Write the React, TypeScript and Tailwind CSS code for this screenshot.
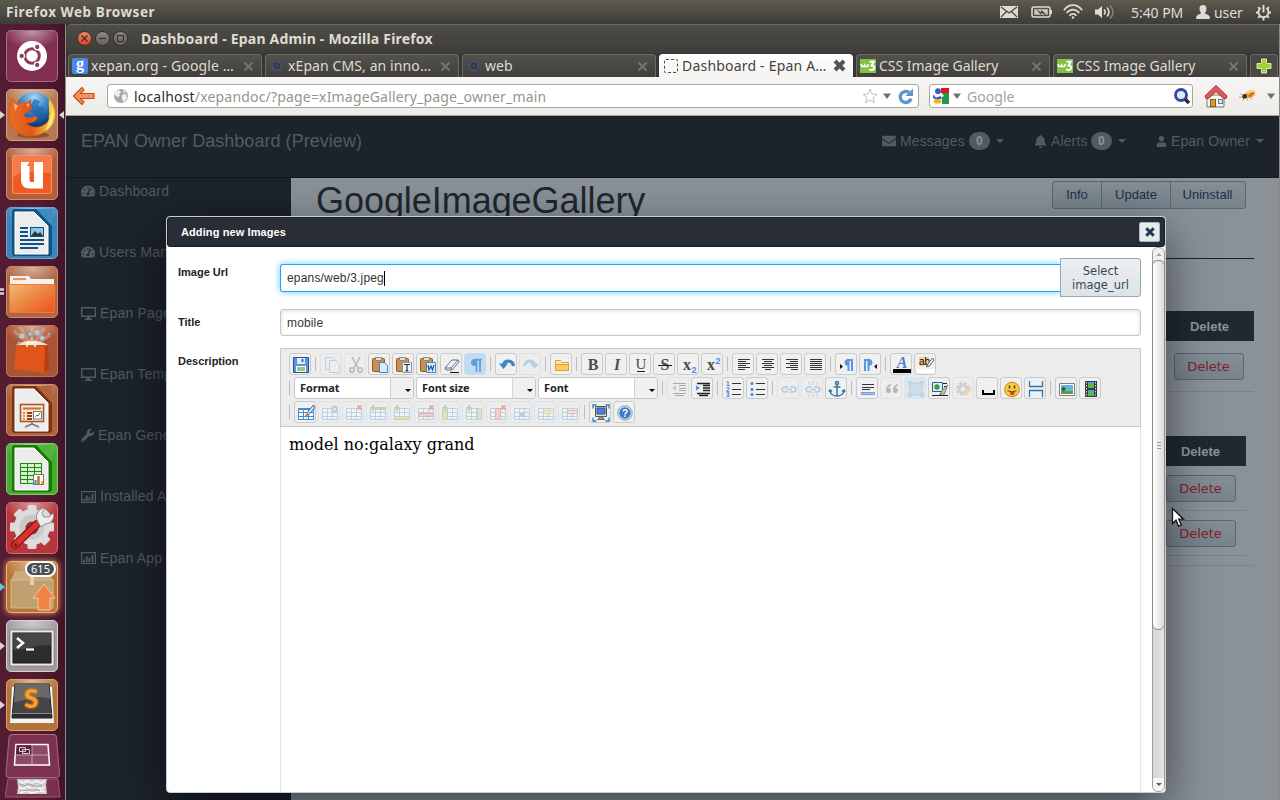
import React from "react";
import type { ReactNode } from "react";
import { FaBell, FaEnvelope, FaTachometerAlt, FaUser, FaWrench } from "react-icons/fa";

const ubuntu = "font-['Noto_Sans',sans-serif]";

/* ---------- top panel ---------- */

function TopBar() {
  return (
    <div className={`flex h-6 shrink-0 items-center justify-between bg-linear-to-b from-[#5d5a4e] to-[#3d3c38] pl-[6px] pr-[8px] text-[#dfdbd2] ${ubuntu}`}>
      <span className="text-[13.5px] font-bold tracking-[0.58px] whitespace-nowrap">Firefox Web Browser</span>
      <div className="flex items-center text-[14px] whitespace-nowrap">
        <svg className="mr-[12px]" width="20" height="14" viewBox="0 0 20 14">
          <rect x="1" y="1" width="18" height="12" fill="#dfdbd2" />
          <path d="M2 2l8 6 8-6M2 12l5.5-5.5M18 12l-5.5-5.5" stroke="#45433d" fill="none" strokeWidth="1.2" />
        </svg>
        <svg className="mr-[10px]" width="22" height="14" viewBox="0 0 22 14">
          <rect x="1" y="2" width="18" height="10" rx="2" fill="none" stroke="#dfdbd2" strokeWidth="1.5" />
          <rect x="3.2" y="4.2" width="13.6" height="5.6" fill="#c9c5bc" />
          <path d="M20 5v4" stroke="#dfdbd2" strokeWidth="2" />
          <path d="M5 4l5 3.500V5l6 5-6-2v2z" fill="#3a3935" />
        </svg>
        <svg className="mr-[12px]" width="20" height="16" viewBox="0 0 20 16" fill="none" stroke="#dfdbd2" strokeWidth="1.7">
          <path d="M.8 6.2C6-.5 14-.5 19.200 6.200M3.700 9C7.500 4.500 12.500 4.500 16.300 9M6.500 11.800c2-2.500 5-2.500 7 0" />
          <circle cx="10" cy="13.500" r="1.200" fill="#dfdbd2" stroke="none" />
        </svg>
        <svg className="mr-[16px]" width="20" height="16" viewBox="0 0 20 16" fill="none" stroke="#dfdbd2" strokeWidth="1.600">
          <path d="M0 5.500h3L7 2v12l-4-3.500H0z" fill="#dfdbd2" stroke="none" />
          <path d="M9 5.500c1.500 1.500 1.500 3.500 0 5M12 3.500c2.500 2.500 2.500 6.500 0 9" />
          <path d="M15 1.500c4 4 4 9 0 13" stroke="#8a877f" />
        </svg>
        <span className="w-[53px] tracking-[-0.05px]">5:40 PM</span>
        <svg className="ml-[12px] mr-[4px]" width="14" height="14" viewBox="0 0 14 14" fill="#dfdbd2">
          <path d="M7 0c2.500 0 3.600 1.500 3.500 3.800C10.400 6 9.500 7.200 9 8c.2 1.200 4.500 1.500 4.800 4v2H.2v-2C.5 9.500 4.800 9.200 5 8 4.500 7.200 3.600 6 3.500 3.800 3.400 1.500 4.500 0 7 0z" />
        </svg>
        <span className="w-[29px] tracking-[-0.1px]">user</span>
        <svg className="ml-[12px]" width="17" height="17" viewBox="0 0 18 18" fill="none" stroke="#dfdbd2">
          <path d="M6 4.300a5.300 5.300 0 1 0 6 0" strokeWidth="2" />
          <path d="M9 1v8" strokeWidth="2" />
          <path d="M9 14.500v3M1 9h3M14 9h3M3.300 14.700l1.800-1.800M14.700 14.700l-1.800-1.800M3.300 3.300l1.800 1.800M14.700 3.300l-1.800 1.800" strokeWidth="2" />
        </svg>
      </div>
    </div>
  );
}

/* ---------- launcher ---------- */

const docSheet = <path d="M11 5h17l14 14v28H9V5z" fill="#ececec" stroke="#fff" strokeWidth="1" />;

function Gear({ cx, cy, r, fill }: { cx: number; cy: number; r: number; fill: string }) {
  return (
    <g>
      {[0, 45, 90, 135].map((a) => (
        <rect key={a} x={cx - 4.500} y={cy - r} width="9" height={2 * r} rx="1.500" fill={fill} transform={`rotate(${a} ${cx} ${cy})`} />
      ))}
      <circle cx={cx} cy={cy} r={r - 4} fill={fill} />
    </g>
  );
}

function Marker({ right, color = "#d8d4d2" }: { right?: boolean; color?: string }) {
  return (
    <svg className={right ? "absolute top-[21px] left-[52px]" : "absolute top-[21px] left-[-7px]"} width="5" height="8" viewBox="0 0 5 8">
      <path d={right ? "M5 0v8L0 4z" : "M0 0v8l5-4z"} fill={color} />
    </svg>
  );
}

function Tile({ className, children, extra }: { className: string; children: ReactNode; extra?: ReactNode }) {
  return (
    <div className={`relative h-[52px] w-[52px] shrink-0 rounded-[5px] border ${className}`}>
      <div className="h-full w-full rounded-[4px] bg-[radial-gradient(ellipse_28px_18px_at_50%_0%,rgba(255,255,255,0.5),rgba(255,255,255,0))]">
        <svg className="relative -top-px -left-px" width="52" height="52" viewBox="0 0 52 52">{children}</svg>
      </div>
      {extra}
    </div>
  );
}

function Launcher() {
  return (
    <div className="flex w-[65px] shrink-0 flex-col gap-[7px] bg-linear-to-r from-[#521c33] via-[#551c33] to-[#431428] pt-[6px] pl-[6px]">
      <Tile className="border-[#a86c84] bg-[#812f50]">
        <circle cx="26" cy="26" r="15" fill="#fff" />
        <circle cx="26" cy="26" r="7.300" fill="none" stroke="#8a3f5c" strokeWidth="3" />
        <g fill="#8a3f5c" stroke="#fff" strokeWidth="1.300">
          <circle cx="15.700" cy="26" r="2.800" />
          <circle cx="31.200" cy="17" r="2.800" />
          <circle cx="31.200" cy="35" r="2.800" />
        </g>
      </Tile>
      <Tile className="border-[#d9a27e] bg-[#b57850]" extra={<><Marker /><Marker right /></>}>
        <defs>
          <radialGradient id="globe" cx="0.500" cy="0.150" r="0.800"><stop offset="0" stopColor="#a9d9f5" /><stop offset="0.450" stopColor="#3a88c8" /><stop offset="1" stopColor="#0b2f6c" /></radialGradient>
          <linearGradient id="fox" x1="0" x2="1"><stop offset="0" stopColor="#ea6f22" /><stop offset="0.550" stopColor="#e0561a" /><stop offset="1" stopColor="#f6c63a" /></linearGradient>
        </defs>
        <ellipse cx="27" cy="46" rx="16" ry="3" fill="#5c3015" opacity="0.500" />
        <circle cx="28" cy="21.500" r="18.500" fill="url(#globe)" />
        <path d="M28 10l6 2-2 5 6 1-1 6 3 3-4 5-7-2-1-6-6-3z" fill="#1c5da3" opacity="0.600" />
        <path d="M43 10c7 8 8 18 3 26-5 8-14 10-20 9 10-2 16-8 17-16 1-6-1-13 0-19z" fill="#f9cf3f" />
        <path d="M6 9l5 6c4-1 7-2 9-1l5-3-1 5 2 4-5 3c-3 1-4 3-2 5 4 2 8-1 12 0 0 5-7 6-11 6 7 7 18 5 24-4 1 5-3 12-9 15-14 6-32-1-32-19 0-7 2-11 3-17z" fill="url(#fox)" stroke="#d9551a" strokeWidth="0.800" />
        <path d="M8 14l4 3-3 5zM20 16l3-2v4z" fill="#fcd9a8" opacity="0.700" />
        <path d="M46 19c3 8 1 18-7 23 3-5 5-12 3-17l1 6q3-5 3-12z" fill="#fbe478" />
      </Tile>
      <Tile className="border-[#d98a66] bg-[#b0603f]">
        <rect x="6.500" y="7.500" width="39" height="38" rx="2" fill="#ef5a25" stroke="#ff9161" />
        <path d="M7 8h38v17C30 25 16 20 7 30z" fill="#ff9a6b" opacity="0.500" />
        <path d="M15 14h8.500l-2 4h2v13.500c0 2 .8 2.500 2.500 2.500h2V14h9v26.500H24c-6 0-9-3-9-9z" fill="#fff" />
        <path d="M23.500 14l-2.500 4h2.500z" fill="#f0703c" />
      </Tile>
      <Tile className="border-[#6ba7cf] bg-[#3f83b8]">
        <rect x="6" y="2" width="40" height="47" rx="3" fill="#0d5389" />
        {docSheet}
        <path d="M30 2h16v17z" fill="#3d8cc4" />
        <path d="M14 21h8M14 25h8M14 29h8M14 33h24M14 37h24M14 41h18" stroke="#0d5389" strokeWidth="2" />
        <rect x="24.500" y="20.500" width="13" height="9" fill="#8dc8ec" stroke="#0d5389" />
        <path d="M25 29l4-5 3 3 2-2 3 4z" fill="#333" />
      </Tile>
      <Tile className="border-[#d08a63] bg-[#ad6843]" extra={<svg className="absolute top-[21px] left-[-7px]" width="6" height="8"><path d="M0 1.500h4M0 5.500h4" stroke="#d8d4d2" strokeWidth="2.500" /></svg>}>
        <defs><linearGradient id="fold" x1="0" y1="0" x2="1" y2="1"><stop offset="0" stopColor="#f3b878" /><stop offset="0.450" stopColor="#eb8a45" /><stop offset="1" stopColor="#f0501e" /></linearGradient></defs>
        <path d="M4 18v-8h19l2 3h23v6H4z" fill="#f4f1ee" />
        <path d="M7 13h13" stroke="#ee9060" strokeWidth="2" />
        <path d="M3 18.500h46l-1 28H4z" fill="url(#fold)" stroke="#e87b3c" />
      </Tile>
      <Tile className="border-[#c8724c] bg-[#a95434]">
        <path d="M26 22L8 6M26 22L14 2M26 22V2M26 22L38 3M26 22L44 10" stroke="#f9c9a4" strokeWidth="3" opacity="0.350" />
        <path d="M10 20q16-9 32 0z" fill="#fff3dc" opacity="0.900" />
        <g fill="#bdc6cd" stroke="#8f9da8" strokeWidth="0.700"><circle cx="16" cy="11" r="3" /><circle cx="24" cy="9" r="2" /><circle cx="31" cy="7.500" r="3" /><circle cx="36" cy="13" r="2.500" /><circle cx="13" cy="18" r="1.300" /><circle cx="26" cy="14" r="1.700" /><circle cx="43" cy="9" r="1" /></g>
        <path d="M10 20l32 1-2 27-32-4z" fill="#e2551a" />
        <path d="M42 21l1 22-5 5 1-27z" fill="#b83e12" />
        <path d="M21 22v-4h8v4" fill="none" stroke="#fff0d8" strokeWidth="1.500" />
      </Tile>
      <Tile className="border-[#d3875c] bg-[#ac6440]">
        <rect x="6" y="2" width="40" height="47" rx="3" fill="#7b3311" />
        {docSheet}
        <path d="M30 2h16v17z" fill="#b3623a" />
        <rect x="14.500" y="20.500" width="23" height="17" fill="#fbe3cf" stroke="#a5531f" strokeWidth="1.500" />
        <path d="M17 24.500h18" stroke="#d07030" strokeWidth="2" />
        <path d="M17 29h2M17 32h2M17 35h2" stroke="#d07030" strokeWidth="1.600" />
        <path d="M21 29h5M21 32h5M21 35h5" stroke="#94400f" strokeWidth="1.800" />
        <rect x="27.500" y="27.500" width="8" height="7.500" fill="#fff" stroke="#777" />
        <path d="M29 33l2-2 1 1 2-3" stroke="#3a9a2c" fill="none" />
        <path d="M26 38v2l-7 3M26 40l7 3" stroke="#777" fill="none" strokeWidth="1.500" />
      </Tile>
      <Tile className="border-[#7ccd69] bg-[#48ab33]">
        <rect x="6" y="2" width="40" height="47" rx="3" fill="#167807" />
        {docSheet}
        <path d="M30 2h16v17z" fill="#4fb33c" />
        <rect x="14" y="20" width="22" height="21" fill="#1c8a0c" />
        {[0, 1, 2, 3, 4].map((r) => [0, 1, 2].map((c) => <rect key={`${r}${c}`} x={15 + c * 7} y={21 + r * 4} width="6" height="3" fill="#d7f0d0" />))}
        <rect x="27.500" y="31.500" width="10" height="10" fill="#fff" stroke="#777" />
        <path d="M29.500 41v-4" stroke="#2c8fd0" strokeWidth="2" /><path d="M32.500 41v-8" stroke="#d8602a" strokeWidth="2.500" /><path d="M36 41v-3" stroke="#e8b020" strokeWidth="2" />
      </Tile>
      <Tile className="border-[#d96a6a] bg-[#b5363d]">
        <Gear cx={26} cy={25} r={22} fill="#dcdcdc" />
        <circle cx="26" cy="25" r="12.500" fill="#c9c9c9" />
        <circle cx="26" cy="26" r="6.500" fill="#9c3038" />
        <path d="M9 43L31 22" stroke="#8d1414" strokeWidth="8" strokeLinecap="round" />
        <path d="M9 43L31 22" stroke="#d8322c" strokeWidth="5.500" strokeLinecap="round" />
        <path d="M31 18c-2-6 2-12 8-12l-3 5 2 4 5 0 4-4c2 6-2 11-8 11l-4 3z" fill="#ececec" stroke="#8c8c8c" />
        <circle cx="9.500" cy="43" r="1.800" fill="#8d1414" />
      </Tile>
      <Tile
        className="border-[#eeb377] bg-[#b9763c] shadow-[0_0_6px_#f5a25a]"
        extra={<><Marker color="#6fc0e8" /><span className={`absolute -top-px left-[18px] flex h-[16px] w-[31px] items-center justify-center rounded-full border-2 border-white bg-[#4b5055] text-[11px] text-white ${ubuntu}`}>615</span></>}
      >
        <path d="M9 10h34l4 9v28H5V19z" fill="#cbab7b" />
        <path d="M5 19h42v28H5z" fill="#c0a071" stroke="#d7b98a" />
        <rect x="24" y="10" width="4" height="14" fill="#e6d0a9" />
        <path d="M38 23l11 14h-5v12H32V37h-5z" fill="#ef8443" stroke="#f7c6a0" />
      </Tile>
      <Tile className="border-[#d6d1d3] bg-[#a29a9d]" extra={<Marker />}>
        <rect x="4" y="10" width="44" height="36" fill="#e9e9e9" stroke="#666" strokeWidth="0.600" />
        <rect x="7" y="13" width="38" height="30" fill="#2d2d2d" stroke="#111" />
        <path d="M7 13h38v12C32 24 20 30 7 30z" fill="#555" opacity="0.600" />
        <path d="M11 18l6 5-6 5" stroke="#fff" strokeWidth="2.500" fill="none" /><path d="M20 29.500h8" stroke="#fff" strokeWidth="2.200" />
      </Tile>
      <Tile className="border-[#e0a268] bg-[#b07339]" extra={<><Marker /><span className="absolute top-[5px] left-[17px] font-['Lato',sans-serif] text-[26px] leading-[26px] font-black text-[#ff9d2b] [text-shadow:0_0_3px_#ff8800]">S</span></>}>
        <path d="M6 8h40l2 36H4z" fill="#f2f2f2" />
        <path d="M9 5h34l3 34H6z" fill="#454545" stroke="#222" />
        <path d="M9 5h34l1 15C30 14 18 23 8 23z" fill="#777" opacity="0.700" />
        <path d="M6 35h40v4H6z" fill="#2b2b2b" /><path d="M6 34.500h40" stroke="#888" />
      </Tile>
      <svg className="-mt-[4px] -ml-px shrink-0" width="56" height="66" viewBox="0 0 56 66">
        <path d="M3 45h50l2 18H0z" fill="#7a2f4b" stroke="#9b5a74" />
        <path d="M12 45h30l-1 6 1 9H12l1-7z" fill="#cfcccc" />
        <path d="M14 47l4 2 4-2 5 2 5-2 4 2 4-2M14 53l4 2 4-3 5 3 5-2 4 2 4-2M15 59l6-2 6 2 8-2 5 1" stroke="#f7f7f7" strokeWidth="1.600" fill="none" />
        <path d="M15 50l5 2 5-2 6 3 6-2M17 56l5 1 5-2 8 2" stroke="#9a9595" strokeWidth="0.800" fill="none" />
        <path d="M7 .500h42q2.500 0 2.500 3l3 37q0 3-3 3H4q-3 0-3-3L4 3.500q0-3 3-3z" fill="#7d3150" stroke="#aa6a84" />
        <path d="M11 10.500h32l1.500 20.500H9.500z" fill="#8e4a64" stroke="#fff" strokeWidth="1.500" />
        <path d="M11.700 11.300H27V20.500H11z" fill="#5a1f36" /><path d="M27 11v20M10 21h34" stroke="#b9a6ad" />
        <path d="M14.500 13.500h6v4h-6zM17.500 15.500h7v4h-7z" fill="#5a1f36" stroke="#d8c8cf" />
      </svg>
    </div>
  );
}

/* ---------- browser chrome ---------- */

function CloseX({ active }: { active?: boolean }) {
  return (
    <svg width="13" height="13" viewBox="0 0 13 13">
      <path d={active ? "M2 2l9 9M11 2l-9 9" : "M2.500 2.500l8 8M10.500 2.500l-8 8"} stroke={active ? "#55534f" : "#77756f"} strokeWidth={active ? 4 : 2} />
    </svg>
  );
}

function CogFav() {
  return (
    <svg width="14" height="14" viewBox="0 0 14 14" fill="none">
      <circle cx="7" cy="7" r="5" stroke="#3f5170" strokeWidth="2" strokeDasharray="2 1.930" />
      <circle cx="7" cy="7" r="3.600" stroke="#3f5170" strokeWidth="1.400" />
      <circle cx="7" cy="7" r="2.500" stroke="#222a38" strokeWidth="0.900" />
    </svg>
  );
}

const googleFav = (
  <span className="flex h-4 w-4 shrink-0 items-center justify-center rounded-[2px] bg-[#4a86f0] font-['Liberation_Serif',serif] text-[16px] leading-none font-bold text-white">
    <span className="-mt-1">g</span>
  </span>
);
const w3Fav = (
  <svg width="16" height="14" viewBox="0 0 16 14" fill="none" stroke="#fff">
    <rect width="16" height="14" fill="#84c241" stroke="none" />
    <path d="M1 5l.800 2.500h2L4.500 6l.800 1.500h2L8.500 5" strokeWidth="1.600" />
    <path d="M9.500 2.800h4.300L11.500 6.500c4 0 3.500 4.500 0 4.500q-1.800 0-2-1.200" strokeWidth="1.900" />
  </svg>
);
const dashedFav = <span className="h-[14px] w-[14px] shrink-0 rounded-[2px] border border-dashed border-[#4a4a4a]" />;

function Tab({ icon, label, tracking, active }: { icon: ReactNode; label: string; tracking: string; active?: boolean }) {
  return (
    <div className={`flex h-[23px] w-[194px] shrink-0 items-center rounded-t-[4px] ${active ? "bg-linear-to-b from-white to-[#f5f3f1] pl-[4px] text-[#45423c]" : "border border-b-0 border-[#6b6962] bg-linear-to-b from-[#52514c] to-[#413f3b] pl-[3px] text-[#dfdbd2]"}`}>
      <span className="flex w-4 shrink-0 justify-center">{icon}</span>
      <span className={`ml-[3px] flex-1 text-[14px] leading-5 whitespace-nowrap ${tracking}`}>{label}</span>
      <span className={active ? "mr-[7px]" : "mr-[6px]"}><CloseX active={active} /></span>
    </div>
  );
}

function WinButton({ red, children }: { red?: boolean; children: ReactNode }) {
  return (
    <span className={`flex h-[15px] w-[15px] items-center justify-center rounded-full border border-[#31302c] ${red ? "bg-linear-to-b from-[#f58563] to-[#de4417]" : "bg-linear-to-b from-[#8b8981] to-[#65635b]"}`}>
      <svg width="9" height="9" viewBox="0 0 9 9" fill="none" stroke="#33322e" strokeWidth="1.200">{children}</svg>
    </span>
  );
}

function Caret({ className }: { className?: string }) {
  return <svg className={className} width="8" height="6" viewBox="0 0 8 6"><path d="M0 .5h8L4 6z" fill="#72706b" /></svg>;
}

function BrowserChrome() {
  return (
    <div className={`shrink-0 ${ubuntu}`}>
      <div className="flex h-[29px] items-center gap-[3px] rounded-tl-[5px] border-t border-[#6c6a62] bg-linear-to-b from-[#4e4c46] to-[#3e3d39] pb-px pl-[11px]">
        <WinButton red><path d="M1.500 1.500l6 6M7.500 1.500l-6 6" /></WinButton>
        <WinButton><path d="M1 4.500h7" /></WinButton>
        <WinButton><rect x="1.500" y="1.500" width="6" height="6" /></WinButton>
        <span className="ml-[10px] text-[14px] leading-[18px] font-bold tracking-[0.2px] whitespace-nowrap text-[#dfdbd2]">Dashboard - Epan Admin - Mozilla Firefox</span>
      </div>
      <div className="flex h-[24px] items-end gap-[3px] bg-[#373632] pl-[2px]">
        <Tab icon={googleFav} label="xepan.org - Google …" tracking="tracking-[0.13px]" />
        <Tab icon={<CogFav />} label="xEpan CMS, an inno…" tracking="tracking-[0.1px]" />
        <Tab icon={<CogFav />} label="web" tracking="tracking-[0.1px]" />
        <Tab icon={dashedFav} label="Dashboard - Epan A…" tracking="tracking-[0.2px]" active />
        <Tab icon={w3Fav} label="CSS Image Gallery" tracking="tracking-[-0.02px]" />
        <Tab icon={w3Fav} label="CSS Image Gallery" tracking="tracking-[-0.02px]" />
        <div className="flex h-[23px] w-[28px] items-center justify-center rounded-t-[4px] border border-b-0 border-[#6b6962] bg-[#4a4944]">
          <svg width="16" height="16" viewBox="0 0 16 16"><path d="M5.500 1h5v4.500H15v5h-4.500V15h-5v-4.500H1v-5h4.500z" fill="#a4cf45" stroke="#d9efb0" /></svg>
        </div>
      </div>
      <div className="flex h-[39px] items-center border-b border-[#a5a29d] bg-linear-to-b from-[#f7f6f4] to-[#edebe8] text-[14px]">
        <svg className="ml-[6px]" width="24" height="20" viewBox="0 0 24 20"><path d="M10 1.500L1.500 10l8.500 8.500 2-2.500-3.500-3.500H22v-5H8.500L12 4z" fill="#f2955b" stroke="#cd4a17" strokeWidth="1.200" strokeLinejoin="round" /></svg>
        <div className="ml-[11px] flex h-[24px] w-[812px] items-center rounded-[3px] border border-[#a9a5a0] bg-white">
          <svg className="ml-[5px]" width="16" height="16" viewBox="0 0 16 16"><circle cx="8" cy="8" r="7" fill="#a9a9a9" /><path d="M2 4l4-2 2 2-2 2 1 2-3 1-2-2zM9 7l4-1 1 4-3 4-2-3zM10 2l3 2-2 1z" fill="#f2f2f2" /></svg>
          <span className="ml-[5px] flex-1 whitespace-nowrap tracking-[0.18px] text-[#979490]"><span className="text-[#2f2d2a]">localhost</span>/xepandoc/?page=xImageGallery_page_owner_main</span>
          <svg width="16" height="16" viewBox="0 0 16 16"><path d="M8 1l2 5 5 .300-4 3.400 1.300 5L8 12l-4.300 2.700L5 9.700 1 6.300 6 6z" fill="#fff" stroke="#c2bfbb" /></svg>
          <Caret className="ml-[5px]" />
          <svg className="ml-[6px] mr-[4px]" width="17" height="17" viewBox="0 0 17 17"><path d="M14 10.500A5.500 5.500 0 1 1 12 4.500" fill="none" stroke="#5b94cf" strokeWidth="3.400" /><path d="M16 .500v7.500H8.500z" fill="#5b94cf" /></svg>
        </div>
        <div className="ml-[10px] flex h-[24px] w-[264px] items-center rounded-[3px] border border-[#a9a5a0] bg-white">
          <svg className="ml-[3px]" width="16" height="16" viewBox="0 0 16 16"><path d="M8 0h8v5H8z" fill="#e8140f" /><path d="M9 5h7v11H9z" fill="#1b9a4e" /><circle cx="5" cy="3.200" r="2.900" fill="#2a62c9" /><path d="M0 6.500l3 3 5-1.500 1 2.500-5 1.500-4-2z" fill="#2a62c9" /><ellipse cx="4.500" cy="13.300" rx="3.800" ry="2.300" fill="#f2b314" /><circle cx="9" cy="7.500" r="1.500" fill="#fff" /></svg>
          <Caret className="ml-[4px]" />
          <span className="ml-[6px] flex-1 tracking-[0.05px] text-[#a5a29e]">Google</span>
          <svg className="mr-[1px]" width="18" height="18" viewBox="0 0 18 18"><circle cx="8" cy="8" r="5.500" fill="#dfe9f5" stroke="#33479c" strokeWidth="2.800" /><path d="M12 12l4 4" stroke="#2b2d3d" strokeWidth="3.500" /></svg>
        </div>
        <svg className="ml-[11px]" width="24" height="24" viewBox="0 0 24 24"><path d="M3 11h17v12H3z" fill="#f4f4f2" stroke="#777" /><path d="M12 1.500L1 12l1 2.500h2.500l7.500-7 7.500 7H22l1-2.500z" fill="#e05a58" stroke="#a92b2b" /><rect x="6.500" y="15.500" width="5" height="7" fill="#d49b35" stroke="#8a5c16" /><rect x="14.500" y="15.500" width="4" height="4" fill="#cfe4f5" stroke="#6d7f92" /></svg>
        <svg className="ml-[11px]" width="18" height="16" viewBox="0 0 18 16"><ellipse cx="11" cy="6" rx="5.500" ry="3.600" fill="#ef9a2e" transform="rotate(-25 11 6)" /><path d="M8 5l5-2.500 3 1" stroke="#f9d98a" strokeWidth="2" fill="none" /><circle cx="5.500" cy="8.500" r="2.400" fill="#3c2d1f" /><path d="M1 5l3 3M0 9l4 0M3 13l3-3M9 13l-1-3M13 12l-2-3" stroke="#a89a8c" strokeWidth="0.800" /><path d="M11 7v1.500M13 5v1.500" stroke="#a83a10" strokeWidth="1.500" /></svg>
        <Caret className="ml-[10px]" />
      </div>
    </div>
  );
}

/* ---------- dashboard page ---------- */

const desktopIcon = <svg width="15" height="13" viewBox="0 0 15 13"><path d="M.7.700h13.600v8.600H.7z" fill="none" stroke="#525b62" strokeWidth="1.400" /><path d="M6 10h3v1.500h2V13H4v-1.500h2z" fill="#525b62" /></svg>;
const chartIcon = <svg width="15" height="12" viewBox="0 0 15 12"><path d="M.6.600h13.800v10.800H.6z" fill="none" stroke="#525b62" strokeWidth="1.200" /><path d="M3 10V7.500M5.700 10V4.500M8.400 10V6M11.500 10V3" stroke="#525b62" strokeWidth="1.900" /></svg>;

const sideItems: { icon: ReactNode; label: string }[] = [
  { icon: <FaTachometerAlt size={14} />, label: "Dashboard" },
  { icon: <FaTachometerAlt size={14} />, label: "Users Management" },
  { icon: desktopIcon, label: "Epan Pages" },
  { icon: desktopIcon, label: "Epan Templates" },
  { icon: <FaWrench size={13} />, label: "Epan General Settings" },
  { icon: chartIcon, label: "Installed Applications" },
  { icon: chartIcon, label: "Epan App" },
];

function Count() {
  return <span className="ml-[4px] flex h-[18px] w-[21px] items-center justify-center rounded-full bg-[#525b62] text-[12px] font-bold text-[#8a9298]">0</span>;
}

function NavCaret({ className }: { className: string }) {
  return <svg className={className} width="8" height="4" viewBox="0 0 8 4"><path d="M0 0h8L4 4z" fill="#525b62" /></svg>;
}

function DeleteButton() {
  return <span className="flex h-[27px] w-[70px] items-center justify-center rounded-[3px] border border-[#55677a] bg-linear-to-b from-[#838e96] to-[#78838b] pr-px font-['DejaVu_Sans',sans-serif] text-[13px] text-[#85222a]">Delete</span>;
}

function Dashboard() {
  return (
    <div className="flex min-h-0 flex-1 flex-col bg-[#1c232a] font-['Liberation_Sans',sans-serif] text-[#525b62]">
      <div className="flex h-[62px] shrink-0 items-start justify-between border-b border-[#12181d] pt-[14px] pr-[15px] pl-[15px]">
        <span className="text-[18px] leading-[22px] tracking-[0.04px]">EPAN Owner Dashboard (Preview)</span>
        <div className="flex items-center pt-[2px] text-[14px] leading-[18px] tracking-[0.12px] whitespace-nowrap">
          <FaEnvelope size={14} /><span className="ml-[4px] w-[65px]">Messages</span><Count /><NavCaret className="ml-[6px]" />
          <FaBell className="ml-[30px]" size={13} /><span className="ml-[4px] w-[36px]">Alerts</span><Count /><NavCaret className="ml-[6px]" />
          <FaUser className="ml-[30px]" size={11} /><span className="ml-[4px] w-[79px]">Epan Owner</span><NavCaret className="ml-[6px]" />
        </div>
      </div>
      <div className="flex min-h-0 flex-1">
        <nav className="flex w-[225px] shrink-0 flex-col pl-[15px] text-[14px] tracking-[0.18px]">
          {sideItems.map((s, i) => (
            <div key={i} className="mb-[35.200px] flex h-[26px] shrink-0 items-center gap-[4px] whitespace-nowrap">{s.icon}<span>{s.label}</span></div>
          ))}
        </nav>
        <div className="flex-1 bg-[#8a9298] pr-[25px] pl-[25px]">
          <div className="flex h-[81px] items-start justify-between border-b border-[#16232e]">
            <h1 className="mt-[3px] text-[36px] leading-[40px] tracking-[-0.05px] text-[#1d2731]">GoogleImageGallery</h1>
            <div className="mt-[3px] mr-[8px] flex h-[28px] rounded-[3px] border border-[#55677a] bg-linear-to-b from-[#838e96] to-[#78838b] text-[13px] text-[#1c3046]">
              <span className="flex w-[49px] items-center justify-center border-r border-[#55677a]">Info</span>
              <span className="flex w-[69px] items-center justify-center border-r border-[#55677a]">Update</span>
              <span className="flex w-[74px] items-center justify-center pr-px">Uninstall</span>
            </div>
          </div>
          <div className="mt-[52px] flex h-[30px] items-center justify-end bg-[#1f2932] pt-px pr-[25px] text-[13px] font-bold text-[#8d959b]">Delete</div>
          <div className="flex h-[51px] items-start justify-end border-b border-[#788289] pt-[12px] pr-[10px]"><DeleteButton /></div>
          <div className="mt-[44px] h-[130px] rounded-b-[3px] border-b border-[#788289] pr-[8px]">
            <div className="flex h-[30px] items-center justify-end bg-[#1f2932] pt-px pr-[26px] text-[13px] font-bold text-[#8d959b]">Delete</div>
            <div className="flex h-[45px] items-start justify-end border-b border-[#788289] pt-[9px] pr-[10px]"><DeleteButton /></div>
            <div className="flex h-[45px] items-start justify-end border-b border-[#788289] pt-[9px] pr-[10px]"><DeleteButton /></div>
          </div>
        </div>
      </div>
    </div>
  );
}

/* ---------- editor toolbar ---------- */

const clip = <g><rect x="0.500" y="1.500" width="12" height="13" rx="1" fill="#c9924e" stroke="#8a5a1e" /><path d="M3.500.500h6v3h-6z" fill="#e8e0cc" stroke="#777" strokeWidth="0.800" /></g>;
const grid = <g><path d="M.5 3.500h15v11H.5z" fill="#fff" /><path d="M.5 3.500h15v11H.5zM.5 7.500h15M.5 11.500h15M5.500 3.500v11M10.500 3.500v11" stroke="#5aa2dc" fill="none" /></g>;
const cross = <path d="M11.500.500l4 4M15.500.500l-4 4" stroke="#d8262c" strokeWidth="2" />;
const plus = <path d="M3 0v6M0 3h6" stroke="#6cae3a" strokeWidth="2" />;
const lines = (rows: [number, number][]) => <path d={rows.map(([a, b], i) => `M${a} ${2.5 + i * 2}H${b}`).join("")} stroke="#333" />;
const chain = <path d="M7 6H4q-3 0-3 2.500T4 11h3M9 6h3q3 0 3 2.500T12 11H9M5 8.500h6" stroke="#4b93c8" strokeWidth="1.600" fill="none" />;
const glyph = (t: string, cls: string, x = 8) => <text x={x} y="13" textAnchor="middle" className={cls}>{t}</text>;
const serif = "fill-[#4d4d4d] font-['Liberation_Serif',serif] text-[16px] font-bold";

const icons: Record<string, ReactNode> = {
  save: <g><path d="M.5.500h15v15H.5z" fill="#5a93e0" stroke="#27539b" /><path d="M4 1h8v6H4z" fill="#dfeafa" /><path d="M9.500 2v3" stroke="#3a6fc0" strokeWidth="2" /><path d="M3 9h10v6H3z" fill="#fff" /><path d="M4 11h8M4 13h8" stroke="#79b453" strokeWidth="1.300" /></g>,
  copy: <g fill="#eaf3fb" stroke="#6b9dc4"><path d="M1.500.500h7l3 3v9h-10z" /><path d="M5.500 3.500h6l4 4v8h-10z" /></g>,
  cut: <g fill="none" stroke="#555" strokeWidth="1.500"><path d="M4 0l6 11M12 0L6 11" /><circle cx="4" cy="13" r="2.200" /><circle cx="12" cy="13" r="2.200" /></g>,
  paste: <g>{clip}<path d="M7.500 5.500h5l3 3v7h-8z" fill="#d7e9fa" stroke="#4b7fc0" /></g>,
  pasteText: <g>{clip}<path d="M6.500 5.500h9v10h-9z" fill="#f4f4f4" stroke="#7a9ac4" /><path d="M8 7.500h6M11 8v6M9.500 13.800h3" stroke="#333" strokeWidth="1.200" /></g>,
  pasteWord: <g>{clip}<path d="M6.500 5.500h9v10h-9z" fill="#e7f1fb" stroke="#4b7fc0" /><path d="M8 8l1 5 2-4 1.500 4 1.500-5" stroke="#1f5e96" strokeWidth="1.300" fill="none" /></g>,
  eraser: <g><path d="M1 11l7-8h6l1 2-7 8H2z" fill="#f7f8fb" stroke="#5a6b94" /><path d="M1 11h6l7-8M7 11l1 2" stroke="#5a6b94" fill="none" /><path d="M6 15.500h9" stroke="#111" /></g>,
  pilcrow: <g><path d="M8.500 2h-2a3.500 3.500 0 0 0 0 7h2z" fill="#5fa0d8" /><path d="M6 2.700h8M8.500 2v13M12 2v13" fill="none" stroke="#5fa0d8" strokeWidth="1.800" /></g>,
  undo: <g><path d="M4.500 8c1-5 9-5.500 10 1" fill="none" stroke="#3a87c4" strokeWidth="3.300" /><path d="M0 6.500h9L4.500 12z" fill="#3a87c4" /></g>,
  redo: <g><path d="M11.500 8c-1-5-9-5.500-10 1" fill="none" stroke="#5a9fd4" strokeWidth="3.300" /><path d="M16 6.500H7l4.500 5.500z" fill="#5a9fd4" /></g>,
  folder: <g><path d="M1.500 13.500v-10h5l1.500 2h6.500v8z" fill="#fbe9b0" stroke="#d7a43a" /><path d="M1.500 7.500h13v6h-13z" fill="#f9cf57" stroke="#d7a43a" /></g>,
  bold: glyph("B", serif),
  italic: glyph("I", `${serif} italic`),
  underline: <g><text x="8" y="12" textAnchor="middle" className="fill-[#4d4d4d] font-['Liberation_Serif',serif] text-[15px]">U</text><path d="M4 14.500h8" stroke="#222" /></g>,
  strike: <g>{glyph("S", serif)}<path d="M1 8.500h14" stroke="#222" /></g>,
  sub: <g>{glyph("x", serif, 6)}<text x="10.500" y="16" className="fill-[#4a8de0] font-['Liberation_Sans',sans-serif] text-[9px] font-bold">2</text></g>,
  sup: <g>{glyph("x", serif, 6)}<text x="10.500" y="7" className="fill-[#4a8de0] font-['Liberation_Sans',sans-serif] text-[9px] font-bold">2</text></g>,
  left: lines([[2, 14], [2, 10], [2, 14], [2, 10], [2, 14], [2, 9]]),
  center: lines([[2, 14], [4, 12], [2, 14], [4, 12], [2, 14], [5, 11]]),
  right: lines([[2, 14], [6, 14], [2, 14], [6, 14], [2, 14], [7, 14]]),
  justify: lines([[2, 14], [2, 14], [2, 14], [2, 14], [2, 14], [2, 14]]),
  ltr: <g><path d="M9 2.500a3 3 0 0 0 0 6z" fill="#5b96e0" stroke="#5b96e0" /><path d="M8 3h6M9.500 3v11M13 3v11" fill="none" stroke="#5b96e0" strokeWidth="2" /><path d="M1 7l3 2.500L1 12z" fill="#111" /></g>,
  rtl: <g><path d="M6 2.500a3 3 0 0 1 0 6z" fill="#5b96e0" stroke="#5b96e0" /><path d="M1 3h6M2 3v11M5.500 3v11" fill="none" stroke="#5b96e0" strokeWidth="2" /><path d="M14 7l-3 2.500 3 2.500z" fill="#111" /></g>,
  color: <g><text x="8" y="11" textAnchor="middle" className="fill-[#4a80d4] font-['Liberation_Serif',serif] text-[16px] font-bold italic">A</text><path d="M-1 14h18" stroke="#000" strokeWidth="4" /></g>,
  bgcolor: <g><path d="M1 0h10v9H1z" fill="#fccf9b" /><text x="1" y="8" className="fill-black font-['Liberation_Sans',sans-serif] text-[10px]">ab</text><path d="M14.500 1l-4 5-2 4 3-1 4.500-6z" fill="#e8edf5" stroke="#666" /><path d="M-1 14h18" stroke="#fff" strokeWidth="4" /></g>,
  outdent: <g><path d="M2 2.500h13M8 4.500h7M8 7.500h7M8 9.500h7M2 12.500h13M4 14.500h9" stroke="#333" /><path d="M5 4.500v5L1 7z" fill="#4a8de0" /></g>,
  indent: <g><path d="M2 2.500h13M8 4.500h7M8 7h7M8 9.500h7M2 12.500h13M4 14.500h9" stroke="#222" strokeWidth="1.300" /><path d="M1 4.500v5L5 7z" fill="#4a8de0" /></g>,
  ol: <g><path d="M6 2.500h9M6 8.500h9M6 13.500h9" stroke="#333" /><g className="fill-[#3f84dd] font-['Liberation_Sans',sans-serif] text-[6.500px] font-bold"><text x="0" y="5">1</text><text x="0" y="10.500">2</text><text x="0" y="16">3</text></g></g>,
  ul: <g><path d="M6 2.500h9M6 8.500h9M6 13.500h9" stroke="#333" /><g fill="#3f84dd"><circle cx="2" cy="2.500" r="1.500" /><circle cx="2" cy="8.500" r="1.500" /><circle cx="2" cy="13.500" r="1.500" /></g></g>,
  link: chain,
  unlink: <g>{chain}<path d="M8 0v4M3 1l2 3M13 1l-2 3M8 13v3M3 16l2-3M13 16l-2-3" stroke="#e05a4a" /></g>,
  anchor: <g fill="none" stroke="#35759f" strokeWidth="1.500"><circle cx="8" cy="2" r="1.500" /><path d="M8 4v11M4.500 6h7M1 9c0 8 14 8 14 0M0 11l1-2 2 1.500M16 11l-1-2-2 1.500" /></g>,
  hr: <g><path d="M2 3.500h12M2 6.500h12M2 8.500h8" stroke="#333" /><path d="M1.500 11.500h13v2h-13z" fill="#a9c7f3" stroke="#6f9be0" /></g>,
  quote: <path d="M7 3Q2 4 2 9a2.500 2.500 0 1 0 2.500-2Q4.500 5 7 4.500zM14 3Q9 4 9 9a2.500 2.500 0 1 0 2.500-2Q11.500 5 14 4.500z" fill="#555" />,
  div: <g><path d="M2 2h12v12H2z" fill="#9cc7e8" stroke="#5a9fd4" /><path d="M0 0h4v4H0zM12 0h4v4h-4zM0 12h4v4H0zM12 12h4v4h-4z" fill="#6fa8d6" /></g>,
  template: <g><path d="M.5 1.500h10v9H.5z" fill="#dff0fa" stroke="#2a5c96" /><circle cx="5" cy="6" r="2.700" fill="#3f9a34" /><path d="M11 2.500h4M12 5.500h3M0 14.500h16" stroke="#222" /><path d="M15.500 4l-5 5-3 5 3-1.500 1.500 1L14 9z" fill="#f1c24a" stroke="#4b7fc0" /></g>,
  gear: <g><circle cx="7" cy="8" r="5.500" fill="none" stroke="#999" strokeWidth="3" strokeDasharray="3 1.300" /><circle cx="7" cy="8" r="3.500" fill="none" stroke="#999" strokeWidth="2" /><path d="M15 6l-7 8" stroke="#f0a94a" strokeWidth="3.500" /></g>,
  nbsp: <path d="M3 9v4h11V9" fill="none" stroke="#000" strokeWidth="2" />,
  smiley: <g><circle cx="8" cy="8.500" r="7.300" fill="#f9cd42" stroke="#b98522" /><path d="M5.500 4.500v3M10.500 4.500v3" stroke="#5d3a0c" strokeWidth="1.500" /><path d="M3.500 9.500q4.500 3 9 0" stroke="#5d3a0c" fill="none" /><path d="M6 11h4.500v2q-2 2.500-4.500 0z" fill="#d9452c" /></g>,
  pagebreak: <g fill="#e4f3fc" stroke="#35759f" strokeWidth="1.300"><path d="M1.500 0v5.500h13V0M1.500 16V9.500h13V16" /></g>,
  image: <g><path d="M.5 2.500h15v12H.5z" fill="#fff" stroke="#7d7d7d" /><path d="M2 4h12v9H2z" fill="#62b3ea" /><path d="M2 10h12v3H2z" fill="#5c9b3e" /><circle cx="4.500" cy="8" r="2" fill="#2c5e22" /></g>,
  video: <g><path d="M2 0h12v16H2z" fill="#3a3a3a" /><path d="M5 1h6v6H5zM5 9h6v6H5z" fill="#4aa4e0" /><path d="M5 4l3-2 3 3v2H5zM5 12l3-2 3 3v2H5z" fill="#5cb83a" /><path d="M3.500 1v15M12.500 1v15" stroke="#ddd" strokeDasharray="1.500 1.500" /></g>,
  table: <g>{grid}<path d="M.5 3.500h15v11H.5zM.5 4.500h15M.5 7.500h15M.5 11.500h15M5.500 3.500v11M10.500 3.500v11" stroke="#3d8ed4" fill="none" /><path d="M15.500 0l-5 6-3 5 4-2 5-6z" fill="#d9ecfa" stroke="#2f6298" /><path d="M6.500 11.500l2-3.500 2 2z" fill="#e49a2c" /></g>,
  tProps: <g>{grid}<circle cx="12.500" cy="4" r="2.500" fill="#ddd" stroke="#888" strokeWidth="2" /></g>,
  tDel: <g>{grid}{cross}</g>,
  rowBefore: <g>{grid}<path d="M6 2h10v3H6z" fill="#6cae3a" />{plus}</g>,
  rowAfter: <g>{grid}<path d="M.5 11.500h15v3H.5z" fill="#b5da93" stroke="#6cae3a" />{plus}</g>,
  rowDel: <g>{grid}<path d="M.5 8.500h15v3H.5z" fill="#f09a92" stroke="#d8554a" />{cross}</g>,
  colBefore: <g>{grid}<path d="M.5 5.500h5v9h-5z" fill="#b5da93" stroke="#6cae3a" />{plus}</g>,
  colAfter: <g>{grid}<path d="M11.500 3.500h4v11h-4z" fill="#b5da93" stroke="#6cae3a" />{plus}</g>,
  colDel: <g>{grid}<path d="M5.500 3.500h5v11h-5z" fill="#f09a92" stroke="#d8554a" />{cross}</g>,
  cell: <g>{grid}<path d="M6 8h4.500v3H6z" fill="#7497b8" /></g>,
  merge: <g>{grid}<path d="M5.500 5.500h10v3h-10z" fill="#ffe48a" stroke="#dfae2c" /></g>,
  split: <g>{grid}<path d="M5.500 5.500h10v3h-10z" fill="#ffd9d6" stroke="#d8554a" /></g>,
  maximize: <g><path d="M2.500 1.500h11v10h-11z" fill="#d8d8d4" stroke="#555" /><path d="M4 3h8v6H4z" fill="#4b81cf" stroke="#2d57a0" /><path d="M6 12h4v2H6zM4 14.500h8" stroke="#666" fill="#bbb" /><path d="M0 3.500V0h3.500M12.500 0H16v3.500M0 12.500V16h3.500M12.500 16H16v-3.500" stroke="#2f7fc0" fill="none" strokeWidth="1.300" /></g>,
  help: <g><circle cx="8" cy="8" r="7.300" fill="#cfe0f2" stroke="#6a96c8" strokeWidth="0.800" /><circle cx="8" cy="8" r="5.700" fill="#3d7ac2" /><text x="8" y="11.500" textAnchor="middle" className="fill-white font-['Liberation_Sans',sans-serif] text-[10px] font-bold">?</text></g>,
};

function Btn({ name, off, on }: { name: string; off?: boolean; on?: boolean }) {
  return (
    <span className={`mr-[2px] flex h-[22px] w-[22px] shrink-0 items-center justify-center rounded-[3px] border pt-[2px] pl-[2px] ${on ? "border-[#c3dcef] bg-[#c1dcf1]" : "border-[#cbcbcb] bg-[#f0f0f0]"} ${off ? "opacity-35" : ""}`}>
      <svg width="16" height="16" viewBox="0 0 16 16" className="shrink-0 overflow-visible">{icons[name]}</svg>
    </span>
  );
}

const Sep = () => <span className="mr-[4px] ml-[2px] h-[14px] w-px shrink-0 bg-[#bdbdbd]" />;
const LeadSep = () => <span className="mr-[4px] h-[14px] w-px shrink-0 bg-[#bdbdbd]" />;

function Combo({ label }: { label: string }) {
  return (
    <span className="mr-[2px] flex h-[22px] w-[120px] shrink-0 overflow-hidden rounded-[3px] border border-[#c8c8c8] bg-white font-['Open_Sans',sans-serif] text-[11px] font-bold text-[#222]">
      <span className="flex flex-1 items-center pl-[5px] tracking-[-0.1px] whitespace-nowrap">{label}</span>
      <span className="flex w-[23px] items-center justify-end border-l border-[#d3d3d3] bg-[#f0f0f0] pt-[4px] pr-[2px]">
        <svg width="6" height="3" viewBox="0 0 6 3"><path d="M0 0h6L3 3z" fill="#000" /></svg>
      </span>
    </span>
  );
}

function EditorToolbar() {
  return (
    <div className="flex h-[79px] flex-col gap-[2px] border border-[#c9c9c9] bg-[#ececec] pt-[4px] pl-[8px]">
      <div className="flex items-center">
        <Btn name="save" /><Sep />
        <Btn name="copy" off /><Btn name="cut" off /><Btn name="paste" /><Btn name="pasteText" /><Btn name="pasteWord" /><Btn name="eraser" /><Btn name="pilcrow" on /><Sep />
        <Btn name="undo" /><Btn name="redo" off /><Sep />
        <Btn name="folder" /><Sep />
        <Btn name="bold" /><Btn name="italic" /><Btn name="underline" /><Btn name="strike" /><Btn name="sub" /><Btn name="sup" /><Sep />
        <Btn name="left" /><Btn name="center" /><Btn name="right" /><Btn name="justify" /><Sep />
        <Btn name="ltr" /><Btn name="rtl" /><Sep />
        <Btn name="color" /><Btn name="bgcolor" />
      </div>
      <div className="flex items-center">
        <LeadSep /><Combo label="Format" /><Combo label="Font size" /><Combo label="Font" /><Sep />
        <Btn name="outdent" off /><Btn name="indent" /><Sep />
        <Btn name="ol" /><Btn name="ul" /><Sep />
        <Btn name="link" off /><Btn name="unlink" off /><Btn name="anchor" /><Sep />
        <Btn name="hr" /><Btn name="quote" off /><Btn name="div" on off /><Btn name="template" /><Btn name="gear" off /><Btn name="nbsp" /><Btn name="smiley" /><Btn name="pagebreak" /><Sep />
        <Btn name="image" /><Btn name="video" />
      </div>
      <div className="flex items-center">
        <LeadSep /><Btn name="table" /><Btn name="tProps" off /><Btn name="tDel" off /><Btn name="rowBefore" off /><Btn name="rowAfter" off /><Btn name="rowDel" off />
        <Btn name="colBefore" off /><Btn name="colAfter" off /><Btn name="colDel" off /><Btn name="cell" off /><Btn name="merge" off /><Btn name="split" off /><Sep />
        <Btn name="maximize" /><Btn name="help" />
      </div>
    </div>
  );
}

/* ---------- dialog ---------- */

function Dialog() {
  return (
    <div className="absolute top-[216px] left-[166px] flex h-[577px] w-[1000px] flex-col rounded-[4px] border border-[#c9ced3] bg-white font-['Liberation_Sans',sans-serif] text-[12px] text-[#222] shadow-[0_16px_50px_rgba(0,0,0,0.55)]">
      <div className="flex h-[30px] shrink-0 items-center justify-between rounded-[3px] border border-[#10202e] bg-[#292d35] pr-[4px] pl-[13px]">
        <span className="text-[11px] font-bold tracking-[0.1px] text-white">Adding new Images</span>
        <span className="flex h-[20px] w-[21px] items-center justify-center rounded-[2px] border border-[#a9b5bf] bg-[#e6ebee]">
          <svg width="10" height="10" viewBox="0 0 10 10"><path d="M1.300 1.300l7.400 7.400M8.700 1.300L1.300 8.700" stroke="#22384e" strokeWidth="3" /></svg>
        </span>
      </div>
      <div className="flex min-h-0 flex-1">
        <div className="flex min-w-0 flex-1 flex-col pl-[11px]">
          <div className="mt-[11px] flex h-[39px] shrink-0">
            <span className="w-[102px] pt-[7px] text-[11px] leading-[14px] font-bold">Image Url</span>
            <div className="mt-[6px] flex h-[28px] w-[780px] items-center rounded-l-[3px] border border-r-0 border-[#1ba5f5] pl-[6px] text-[#333] shadow-[0_0_7px_rgba(0,160,255,0.6)]">
              <span className="tracking-[0.18px]">epans/web/3.jpeg</span><span className="h-[15px] w-px bg-black" />
            </div>
            <span className="z-10 flex h-[39px] w-[81px] items-center justify-center rounded-r-[3px] border border-[#97a6b5] bg-linear-to-b from-[#edf0f2] to-[#dde3e6] text-center font-['DejaVu_Sans',sans-serif] text-[11.500px] leading-[14px] text-[#39475c]">Select<br />image_url</span>
          </div>
          <div className="mt-[12px] flex h-[27px] shrink-0">
            <span className="w-[102px] pt-[6px] text-[11px] leading-[14px] font-bold">Title</span>
            <div className="flex w-[861px] items-center rounded-[3px] border border-[#c6c6c6] pl-[6px] tracking-[0.15px] text-[#333] shadow-[inset_0_1px_4px_rgba(0,0,0,0.14)]">mobile</div>
          </div>
          <div className="mt-[12px] flex min-h-0 flex-1">
            <span className="w-[102px] shrink-0 pt-[6px] text-[11px] leading-[14px] font-bold">Description</span>
            <div className="flex w-[861px] flex-col">
              <EditorToolbar />
              <div className="flex-1 border-x border-[#e6e6e6] pt-[7px] pl-[8px] font-['DejaVu_Serif',serif] text-[16px] leading-[22px] text-black">model no:galaxy grand</div>
            </div>
          </div>
        </div>
        <div className="flex w-[13px] shrink-0 flex-col rounded-[6px] border border-[#a19e99] bg-linear-to-r from-[#d9d7d5] to-[#e4e2e0]">
          <span className="flex h-[12px] items-center justify-center rounded-t-[6px] bg-[#f1f0ef]"><svg width="6" height="3" viewBox="0 0 6 3"><path d="M0 3h6L3 0z" fill="#a8a5a1" /></svg></span>
          <span className="-mx-px flex h-[370px] flex-col items-center justify-center gap-[2px] rounded-[6px] border border-[#8e8b87] bg-linear-to-r from-white to-[#dddbd9]">
            <span className="h-px w-[4px] bg-[#999]" /><span className="h-px w-[4px] bg-[#999]" /><span className="h-px w-[4px] bg-[#999]" />
          </span>
          <span className="mt-auto flex h-[13px] items-center justify-center rounded-b-[6px] bg-[#f6f5f4]"><svg width="6" height="3" viewBox="0 0 6 3"><path d="M0 0h6L3 3z" fill="#5d5a56" /></svg></span>
        </div>
      </div>
    </div>
  );
}

export default function App() {
  return (
    <div className="relative flex h-[800px] w-[1280px] flex-col overflow-hidden bg-[#1c232a]">
      <TopBar />
      <div className="flex min-h-0 flex-1">
        <Launcher />
        <div className="flex min-w-0 flex-1 flex-col border-x border-[#8c8a86]">
          <BrowserChrome />
          <Dashboard />
        </div>
      </div>
      <Dialog />
      <svg className="absolute top-[507px] left-[1171px]" width="14" height="21" viewBox="0 0 14 21">
        <path d="M1.500 1.500v15l3.500-3.300 2.600 6 2.700-1.200-2.600-5.800h4.800z" fill="#fff" stroke="#111" strokeWidth="1.300" />
      </svg>
    </div>
  );
}
